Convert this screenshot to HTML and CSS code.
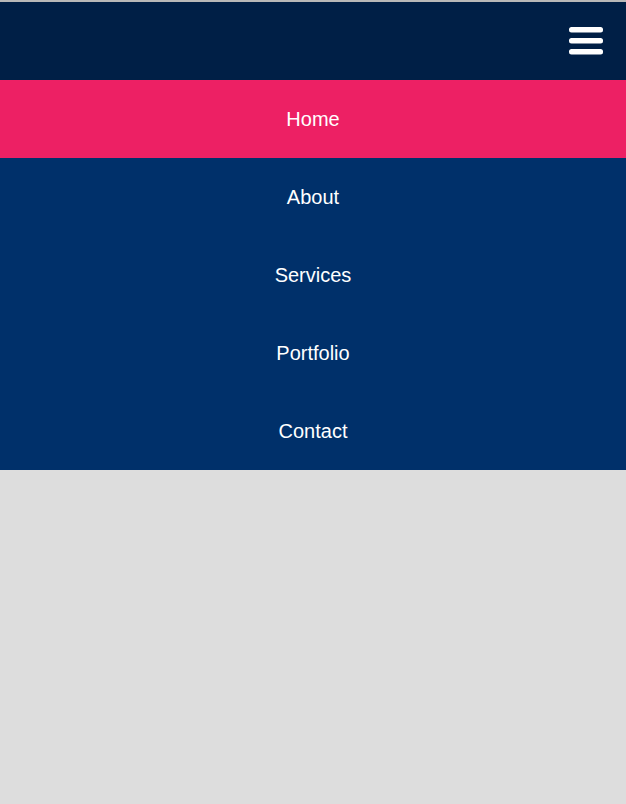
FILE: index.html
```html
<!DOCTYPE html>
<html>
<head>
<meta charset="utf-8">
<link rel="stylesheet" href="styles.css">
</head>
<body>
<header class="topbar">
  <button class="menu-toggle" aria-label="Menu">
    <svg width="34" height="28" viewBox="0 0 34 28">
      <rect x="0" y="0" width="34" height="5.5" rx="2.5" fill="#fff"/>
      <rect x="0" y="11" width="34" height="5.5" rx="2.5" fill="#fff"/>
      <rect x="0" y="22" width="34" height="5.5" rx="2.5" fill="#fff"/>
    </svg>
  </button>
</header>
<nav class="menu">
  <a class="item active" href="#">Home</a>
  <a class="item" href="#">About</a>
  <a class="item" href="#">Services</a>
  <a class="item" href="#">Portfolio</a>
  <a class="item" href="#">Contact</a>
</nav>
</body>
</html>
```
FILE: styles.css
```css
html, body {
  margin: 0;
  padding: 0;
}
body {
  background: #dddddd;
  font-family: "Liberation Sans", Arial, sans-serif;
  border-top: 2px solid #b8b8b8;
  min-height: 802px;
}
.topbar {
  height: 78px;
  background: #001f46;
  display: flex;
  align-items: center;
  justify-content: flex-end;
  padding-right: 23px;
}
.menu-toggle {
  background: none;
  border: 0;
  padding: 0;
  display: flex;
  margin-top: 0;
}
.menu {
  display: flex;
  flex-direction: column;
  background: #00306a;
}
.item {
  height: 78px;
  display: flex;
  align-items: center;
  justify-content: center;
  color: #fff;
  text-decoration: none;
  font-size: 20px;
}
.item.active {
  background: #ed2064;
}
```
